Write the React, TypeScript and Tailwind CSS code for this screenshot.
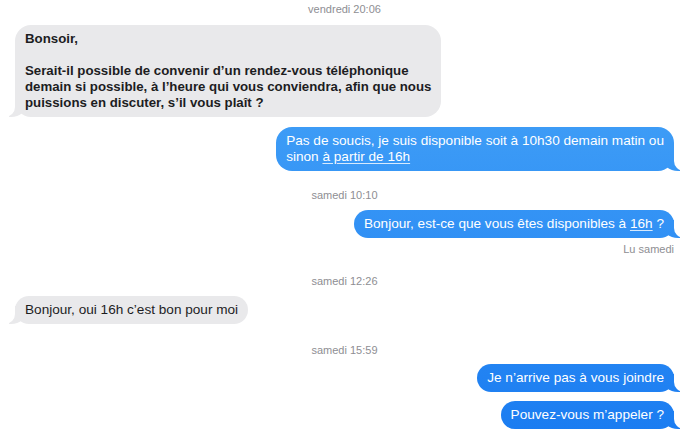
import type { ReactNode } from "react";

// blue bubbles share one gradient pinned to the viewport, like Messages does
function Sent({ children }: { children: ReactNode }) {
  return (
    <div className="relative w-fit rounded-[16px] bg-fixed bg-linear-to-b from-[#4aa8f8] to-[#1a7cf1] px-[10px] py-[6px] text-white">
      <span className="absolute bottom-0 -right-[6px] h-[18px] w-[18px] rounded-bl-[16px_14px] bg-fixed bg-linear-to-b from-[#4aa8f8] to-[#1a7cf1]" />
      <span className="absolute bottom-0 -right-[24px] h-[18px] w-[24px] rounded-bl-[10px] bg-white" />
      <span className="relative">{children}</span>
    </div>
  );
}

function Received({ children, bold }: { children: ReactNode; bold?: boolean }) {
  return (
    <div
      className={
        bold
          ? "relative w-fit rounded-[16px] bg-[#e9e9eb] px-[10px] py-[6px] text-[13.25px] font-bold text-[#1d1d1f]"
          : "relative w-fit rounded-[16px] bg-[#e9e9eb] px-[10px] py-[6px] text-[#1d1d1f]"
      }
    >
      <span className="absolute bottom-0 -left-[6px] h-[18px] w-[18px] rounded-br-[16px_14px] bg-[#e9e9eb]" />
      <span className="absolute bottom-0 -left-[24px] h-[18px] w-[24px] rounded-br-[10px] bg-white" />
      <span className="relative">{children}</span>
    </div>
  );
}

function Stamp({ children }: { children: ReactNode }) {
  return (
    <div className="text-center text-[11px] leading-[12px] text-[#8e8e93]">
      {children}
    </div>
  );
}

function Link({ children }: { children: ReactNode }) {
  return (
    <span className="underline decoration-white/80 underline-offset-2">
      {children}
    </span>
  );
}

export default function App() {
  return (
    <div className="min-h-screen w-full overflow-hidden bg-white pt-[3px] pl-[15px] pr-[7px] font-['Liberation_Sans',Arial,sans-serif] text-[13.6px] leading-[16px] antialiased">
      <Stamp>vendredi 20:06</Stamp>

      <div className="mt-[10px] flex">
        <Received bold>
          Bonsoir,
          <br />
          <br />
          Serait-il possible de convenir d’un rendez-vous téléphonique
          <br />
          demain si possible, à l’heure qui vous conviendra, afin que nous
          <br />
          puissions en discuter, s’il vous plaît ?
        </Received>
      </div>

      <div className="mt-[10px] flex justify-end">
        <Sent>
          Pas de soucis, je suis disponible soit à 10h30 demain matin ou
          <br />
          sinon <Link>à partir de 16h</Link>
        </Sent>
      </div>

      <div className="mt-[18px]">
        <Stamp>samedi 10:10</Stamp>
      </div>

      <div className="mt-[9px] flex justify-end">
        <Sent>
          Bonjour, est-ce que vous êtes disponibles à <Link>16h</Link> ?
        </Sent>
      </div>

      <div className="mt-[5px] text-right text-[11px] leading-[12px] text-[#8e8e93]">
        Lu samedi
      </div>

      <div className="mt-[20px]">
        <Stamp>samedi 12:26</Stamp>
      </div>

      <div className="mt-[9px] flex">
        <Received>Bonjour, oui 16h c’est bon pour moi</Received>
      </div>

      <div className="mt-[20px]">
        <Stamp>samedi 15:59</Stamp>
      </div>

      <div className="mt-[8px] flex justify-end">
        <Sent>Je n’arrive pas à vous joindre</Sent>
      </div>

      <div className="mt-[9px] flex justify-end">
        <Sent>Pouvez-vous m’appeler ?</Sent>
      </div>
    </div>
  );
}
